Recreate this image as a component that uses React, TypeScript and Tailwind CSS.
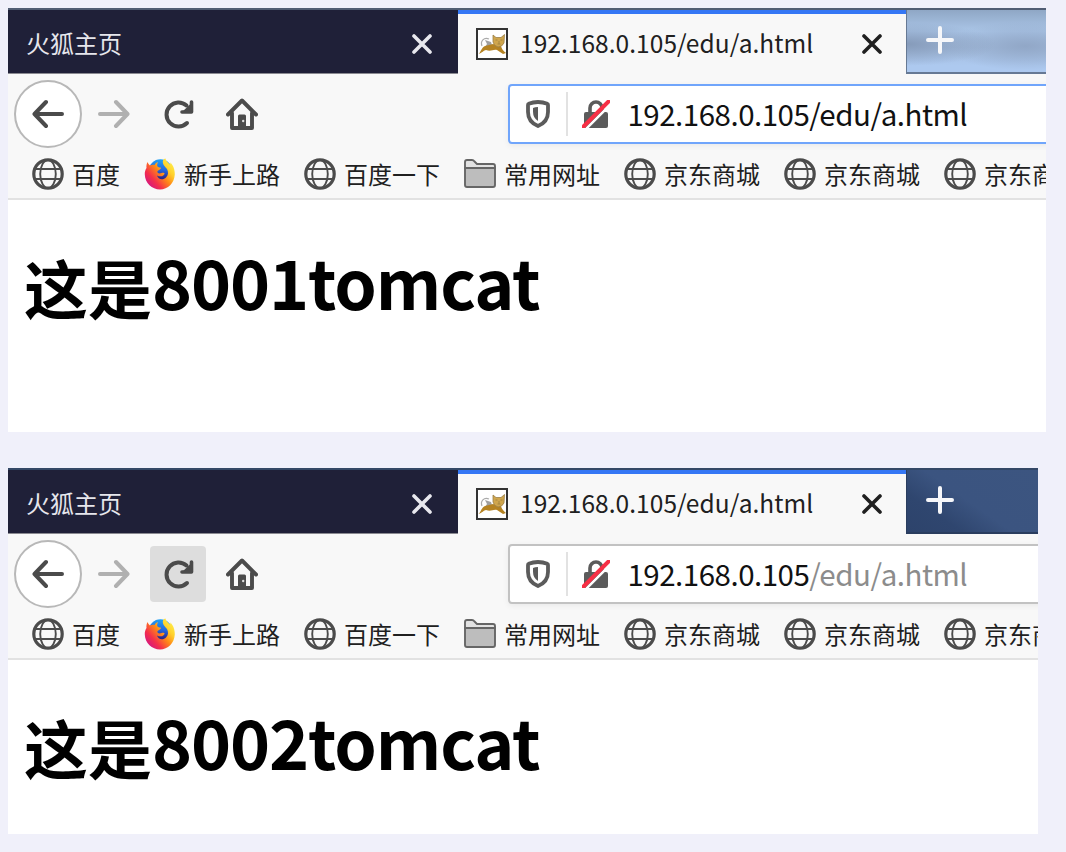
import React from "react";

const Globe = () => (
  <svg className="size-8 shrink-0" viewBox="0 0 32 32" fill="none" stroke="#4c4c4c">
    <circle cx="16" cy="16" r="14.2" strokeWidth="3.2" />
    <ellipse cx="16" cy="16" rx="7.8" ry="14" strokeWidth="1.9" />
    <path d="M2 11h28M2 21h28" strokeWidth="1.9" />
  </svg>
);

const Firefox = () => (
  <svg className="size-8 shrink-0" viewBox="0 0 32 32">
    <defs>
      <linearGradient id="flame" x1="0.95" y1="0.05" x2="0.1" y2="0.8">
        <stop offset="0" stopColor="#fff44f" />
        <stop offset="0.3" stopColor="#ffd02c" />
        <stop offset="0.52" stopColor="#ff8a18" />
        <stop offset="0.8" stopColor="#f5304a" />
        <stop offset="1" stopColor="#d91a7a" />
      </linearGradient>
      <linearGradient id="orb" x1="0.6" y1="0" x2="0.5" y2="1">
        <stop offset="0" stopColor="#21a4f5" />
        <stop offset="0.45" stopColor="#2468e0" />
        <stop offset="0.85" stopColor="#2b1f80" />
      </linearGradient>
    </defs>
    <circle cx="16.500" cy="13" r="11.800" fill="url(#orb)" />
    <path
      d="M3.500 4C4 5.500 5 6.500 6 7.500C7.500 6.600 9 6.500 10.500 6.900C11.500 5.200 12.500 4.500 14 4C13 6 13 7.500 13.500 8.500C14.500 9.500 16 9.500 17 9.700C17 11.500 15 11.800 13.500 13C13 14.500 14 15.500 15.500 15.500C17.500 15.500 18.500 14.500 20 15C21 15.300 20.500 16.500 19.500 17.200C18 18.700 15.500 18.700 13 17.500C14 21.500 19 22.500 22 19.500C24.500 17 24.500 14 23 11C21.500 9 18.500 6.500 18.800 3.500C19 1.500 20.500 .8 21.500 .5C21.500 2.500 24 4.500 26 6.500C26.600 6 26.500 5 26.300 4.200C29 7 31 11.500 30.800 16.500C30.300 25 24 31.500 16 31.500C8 31.500 1 25 .8 16.500C.5 14 1.500 11.500 2.500 10C2.300 8 2.500 6 3.500 4Z"
      fill="url(#flame)"
    />
  </svg>
);

const Folder = () => (
  <svg className="size-8 shrink-0" viewBox="0 0 32 32" stroke="#666" strokeWidth="1.9" strokeLinejoin="round">
    <path d="M1 10V4Q1 2 3 2H8Q9.500 2 10.500 3.500L13 6H29Q31 6 31 8V10Z" fill="#e2e2e2" />
    <path d="M1 10H31V27Q31 29 29 29H3Q1 29 1 27Z" fill="#bdbdbd" />
  </svg>
);

const Cat = () => (
  <svg className="size-8 shrink-0" viewBox="0 0 32 32">
    <rect x="1" y="1" width="30" height="30" fill="#fff" stroke="#333" strokeWidth="2" />
    <path d="M13 11C8 9 4 13 6 18" fill="none" stroke="#aaa" strokeWidth="1.2" />
    <path d="M9 12L15 14L16 17L9 19L11 16Z" fill="#777" opacity=".7" />
    <path d="M2.500 26C5 24 5 20 9 18L17 16L25 18C26 22 28 23 30 25L27 26L21 22C17 21 15 24 10 22C8 22 6 25 2.500 26Z" fill="#b58322" />
    <path d="M17 7L20 9.500H25L28.500 6.500L28 15Q26 19 22 19Q18 18 17 14Z" fill="#d0a64d" stroke="#9b8049" strokeWidth=".8" />
    <path d="M19.500 12H21.500M24.500 12H26.500M21.500 16H24.500M23 13V16" stroke="#a58643" />
  </svg>
);

const Close = ({ color }: { color: string }) => (
  <svg className="size-5 shrink-0" viewBox="0 0 20 20" fill="none" stroke={color} strokeWidth="3.600" strokeLinecap="round">
    <path d="M2 2L18 18M18 2L2 18" />
  </svg>
);

const Arrow = ({ color, flip }: { color: string; flip?: boolean }) => (
  <svg className={flip ? "size-8 shrink-0 rotate-180" : "size-8 shrink-0"} viewBox="0 0 32 32" fill="none" stroke={color} strokeWidth="4" strokeLinecap="round" strokeLinejoin="round">
    <path d="M30 16H3M14 4L2.500 16L14 28" />
  </svg>
);

const Reload = () => (
  <svg className="size-8" viewBox="0 0 32 32" fill="none" stroke="#4b4b4b" strokeWidth="4" strokeLinecap="round">
    <path d="M25 25A12 12 0 1 1 24.500 7.500" />
    <path d="M20 14L29.500 5V14Z" fill="#4b4b4b" stroke="none" />
    <path d="M20 14H29.500V4" strokeWidth="3.600" strokeLinejoin="round" />
  </svg>
);

const Home = () => (
  <svg className="size-8" viewBox="0 0 32 32" fill="none" stroke="#4b4b4b" strokeWidth="3.900" strokeLinecap="round" strokeLinejoin="round">
    <path d="M2 16.500L16 2.500L30 16.500" />
    <path d="M6 15V30H26V15" />
    <path d="M13.500 18H18.500V29H13.500Z" fill="#4b4b4b" strokeWidth="3" />
    <circle cx="17.200" cy="23" r="1.200" fill="#ddd" stroke="none" />
  </svg>
);

const Shield = () => (
  <svg className="h-7 w-6 shrink-0" viewBox="0 0 24 28" fill="none">
    <path d="M12 2Q17 2 21.300 3.800Q22 4 22 5V12Q22 22 12 26Q2 22 2 12V5Q2 4 2.700 3.800Q7 2 12 2Z" stroke="#5b5b5b" strokeWidth="3.800" />
    <path d="M12 7V21Q7 18 7 11.500V8Q9 7 12 7Z" fill="#5b5b5b" />
  </svg>
);

const Lock = () => (
  <svg className="size-7 shrink-0" viewBox="0 0 28 28" fill="none">
    <path d="M8 13V8A6 6 0 0 1 20 8V13" stroke="#5b5b5b" strokeWidth="3.600" />
    <rect x="2" y="12" width="24" height="16" rx="2" fill="#5b5b5b" />
    <path d="M4.500 28.500L28 5" stroke="#fff" strokeWidth="2.500" />
    <path d="M1.500 26.500L26.500 1.500" stroke="#f72f45" strokeWidth="3.900" strokeLinecap="round" />
  </svg>
);

const bookmarks = [
  { icon: "globe", label: "百度" },
  { icon: "firefox", label: "新手上路" },
  { icon: "globe", label: "百度一下" },
  { icon: "folder", label: "常用网址" },
  { icon: "globe", label: "京东商城" },
  { icon: "globe", label: "京东商城" },
  { icon: "globe", label: "京东商城" },
];

type BrowserProps = { port: string; focused: boolean; sizeClass: string; stripClass: string; edgeClass: string };

function Browser({ port, focused, sizeClass, stripClass, edgeClass }: BrowserProps) {
  return (
    <section className={`flex shrink-0 flex-col overflow-hidden bg-white ${sizeClass}`}>
      <header className={`flex h-[66px] shrink-0 border-t-2 ${edgeClass}`}>
        <div className="flex w-[450px] shrink-0 items-center justify-between border-b border-[#8a8a91] bg-[#1f2038] pl-[18px] pr-[26px] pt-[4px] text-[24px] leading-[34px] text-[#e6e6ec]">
          <span className="-translate-y-px">火狐主页</span>
          <Close color="#e8e8ee" />
        </div>
        <div className="flex w-[448px] shrink-0 items-center border-t-4 border-[#3577f5] bg-[#f8f8f8] pl-[18px] pr-[24px]">
          <Cat />
          <span className="ml-3 grow -translate-y-px whitespace-nowrap text-[24.5px] leading-[34px] tracking-[0.05px] text-[#202020]">192.168.0.105/edu/a.html</span>
          <Close color="#202020" />
        </div>
        <div className={`flex grow items-start border-b-2 border-l pl-[19px] pt-4 ${stripClass}`}>
          <svg className="size-7" viewBox="0 0 28 28" stroke="#f6f7fa" strokeWidth="4" strokeLinecap="round">
            <path d="M14 2V26M2 14H26" />
          </svg>
        </div>
      </header>
      <nav className="flex h-[76px] shrink-0 items-center bg-[#f8f8f8] pl-1.5 pt-[4px]">
        <div className="flex size-[68px] shrink-0 items-center justify-center rounded-full border-2 border-[#b8b8b8] bg-white">
          <Arrow color="#4b4b4b" />
        </div>
        <div className="ml-4 flex">
          <Arrow color="#b0b0b0" flip />
        </div>
        <div className={`ml-5 flex size-14 shrink-0 items-center justify-center rounded ${focused ? "" : "bg-[#dddddd]"}`}>
          <Reload />
        </div>
        <div className="ml-5 flex">
          <Home />
        </div>
        <div className={`ml-[250px] flex h-[60px] w-[600px] shrink-0 items-center rounded-l-[4px] border-2 bg-white pl-4 shadow-[0_2px_6px_rgba(0,0,0,0.06)] ${focused ? "border-[#70a5fb]" : "border-[#c2c2c2]"}`}>
          <Shield />
          <div className="ml-4 mr-[14px] h-11 w-0.5 shrink-0 bg-[#e2e2e2]" />
          <Lock />
          <span className="ml-[17.5px] -translate-y-px whitespace-nowrap text-[29.5px] leading-[40px] tracking-[-0.5px] text-[#111]">
            192.168.0.105<span className={focused ? "" : "text-[#8c8c8c]"}>/edu/a.html</span>
          </span>
        </div>
      </nav>
      <div className="flex h-[50px] shrink-0 items-center gap-6 border-b-2 border-[#e2e2e2] bg-[#f8f8f8] pl-6">
        {bookmarks.map((b, i) => (
          <div key={i} className="flex shrink-0 items-center gap-2">
            {b.icon === "globe" ? <Globe /> : b.icon === "folder" ? <Folder /> : <Firefox />}
            <span className="whitespace-nowrap text-[24px] leading-[32px] text-[#202020]">{b.label}</span>
          </div>
        ))}
      </div>
      <main className="pl-4 pt-[42px]">
        <h1 className="flex whitespace-nowrap text-[64px] font-bold leading-[88px] text-black">
          <span>这是</span>
          <span className="-translate-y-[5px] text-[68px] tracking-[-1.1px]">{port}tomcat</span>
        </h1>
      </main>
    </section>
  );
}

export default function App() {
  return (
    <div className="flex h-[852px] w-[1066px] flex-col gap-9 overflow-hidden bg-[#f0f0fa] pl-2 pt-2 font-['Noto_Sans_CJK_SC',sans-serif]">
      <Browser
        port="8001"
        focused
        sizeClass="h-[424px] w-[1038px]"
        edgeClass="border-[#515d73]"
        stripClass="border-[#667994] bg-[radial-gradient(ellipse_at_0%_55%,#869bba_0%,transparent_45%),radial-gradient(ellipse_at_85%_58%,#91a7c7_0%,transparent_48%),linear-gradient(to_bottom,#8fa7c5_0%,#abc6e8_35%,#a5bedf_60%,#adc9ef_90%)]"
      />
      <Browser
        port="8002"
        focused={false}
        sizeClass="h-[366px] w-[1030px]"
        edgeClass="border-[#344866]"
        stripClass="border-[#2a3d5e] bg-[linear-gradient(35deg,#2d436b_0%,#2f466f_25%,#3b5480_48%,#3c5580_100%)]"
      />
    </div>
  );
}
